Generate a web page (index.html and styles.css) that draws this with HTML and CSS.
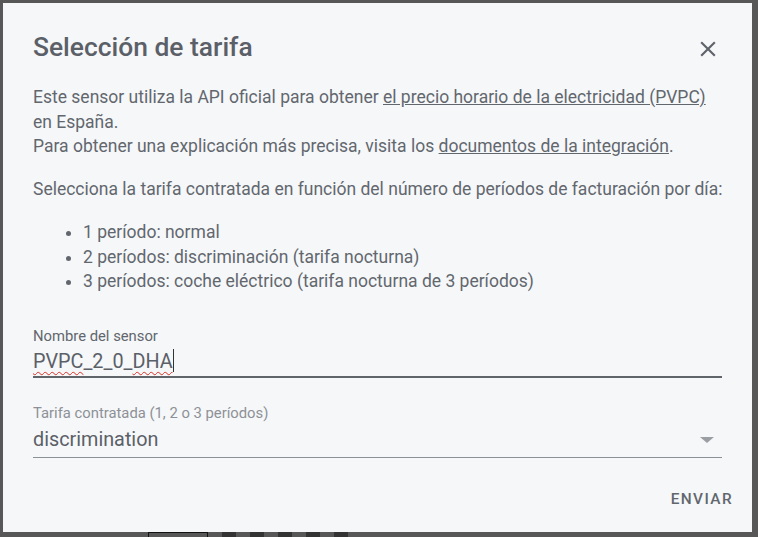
FILE: index.html
```html
<!DOCTYPE html>
<html lang="es">
<head>
  <meta charset="UTF-8">
  <title>Selección de tarifa</title>
  <link rel="stylesheet" href="styles.css">
</head>
<body>

<div class="dialog">
  <div class="dialog-head">
    <h2>Selección de tarifa</h2>
    <button class="close" aria-label="Cerrar">
      <svg width="26" height="26" viewBox="0 0 24 24"><path d="M19,6.41L17.59,5L12,10.59L6.41,5L5,6.41L10.59,12L5,17.59L6.41,19L12,13.41L17.59,19L19,17.59L13.41,12L19,6.41Z" fill="currentColor"/></svg>
    </button>
  </div>

  <div class="description">
    <p>Este sensor utiliza la API oficial para obtener <a href="#">el precio horario de la electricidad (PVPC)</a> en España.<br>
    Para obtener una explicación más precisa, visita los <a href="#">documentos de la integración</a>.</p>
    <p>Selecciona la tarifa contratada en función del número de períodos de facturación por día:</p>
    <ul>
      <li>1 período: normal</li>
      <li>2 períodos: discriminación (tarifa nocturna)</li>
      <li>3 períodos: coche eléctrico (tarifa nocturna de 3 períodos)</li>
    </ul>
  </div>

  <div class="field focused">
    <label>Nombre del sensor</label>
    <div class="value"><span class="typo">PVPC</span>_2_0_<span class="typo">DHA</span><span class="caret"></span></div>
  </div>

  <div class="field select">
    <label>Tarifa contratada (1, 2 o 3 períodos)</label>
    <div class="value">discrimination<span class="arrow"></span></div>
  </div>

  <div class="actions">
    <button class="submit">Enviar</button>
  </div>
</div>

<div class="underlay">
  <span class="box"></span>
  <span class="ico"></span><span class="ico"></span><span class="ico"></span><span class="ico"></span><span class="ico"></span>
</div>

</body>
</html>
```

FILE: styles.css
```css
body {
  margin: 0;
  background-color: #575757;
  font-family: 'Roboto', sans-serif;
  overflow: hidden;
}
.dialog {
  margin: 3px 0 0 3px;
  width: 749px;
  height: 529px;
  box-sizing: border-box;
  background-color: #f6f7f9;
  padding: 28px 30px 0;
  color: #62676e;
  display: flex;
  flex-direction: column;
}
.dialog-head {
  display: flex;
  align-items: center;
  justify-content: space-between;
  height: 32px;
}
.dialog-head h2 {
  margin: 0;
  font-size: 26.4px;
  line-height: 32px;
  font-weight: 500;
  color: #5b6068;
}
.close {
  background: none;
  border: none;
  padding: 0;
  margin-right: 1px;
  margin-top: 4px;
  color: #5f636b;
  width: 26px;
  height: 26px;
  cursor: pointer;
}
.description {
  font-size: 17.5px;
  line-height: 24.6px;
  margin-top: 22px;
  margin-right: -3px;
}
.description p {
  margin: 0 0 18.4px;
}
.description a {
  color: #62676e;
}
.description ul {
  margin: 0;
  padding-left: 50px;
}
.field {
  margin-top: 34px;
  border-bottom: 1px solid #8d9197;
  padding-bottom: 3px;
}
.field.focused {
  border-bottom: 2px solid #60656c;
  padding-bottom: 0;
}
.field label {
  display: block;
  font-size: 14.8px;
  color: #61666d;
  line-height: 17px;
}
.field .value {
  font-size: 19.8px;
  line-height: 28px;
  margin-top: 3.5px;
  color: #5b6068;
}
.typo {
  text-decoration: underline wavy #d93025;
  text-decoration-thickness: 1px;
  text-underline-offset: 3px;
}
.caret {
  display: inline-block;
  width: 1px;
  height: 23px;
  background-color: #333;
  vertical-align: -4px;
}
.field.select {
  margin-top: 26.5px;
}
.field.select label {
  color: #8d9197;
}
.field.select .value {
  display: flex;
  justify-content: space-between;
  align-items: center;
  margin-top: 4.5px;
}
.arrow {
  width: 0;
  height: 0;
  border-left: 7px solid transparent;
  border-right: 7px solid transparent;
  border-top: 6px solid #9b9ea3;
  margin-right: 8px;
}
.actions {
  margin-top: auto;
  display: flex;
  justify-content: flex-end;
  padding-bottom: 16px;
}
.submit {
  background: none;
  border: none;
  font-family: 'Roboto', sans-serif;
  font-size: 15.4px;
  line-height: 18px;
  font-weight: 500;
  letter-spacing: 1.4px;
  text-transform: uppercase;
  color: #62676e;
  margin-right: -19px;
  padding: 8px;
}
.underlay {
  display: flex;
  gap: 14px;
  padding-left: 148px;
  height: 5px;
}
.underlay .box {
  width: 60px;
  height: 5px;
  border: 1px solid #111;
  border-bottom: none;
  box-sizing: border-box;
}
.underlay .ico {
  width: 14px;
  height: 5px;
  background-color: #333;
}
```
